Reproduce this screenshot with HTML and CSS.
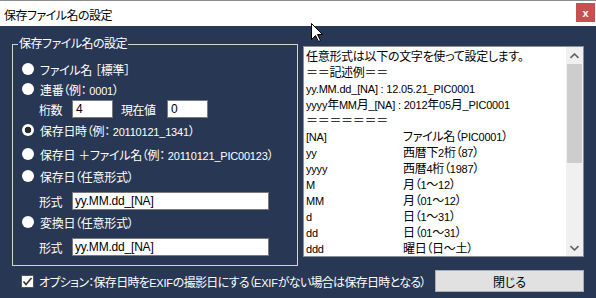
FILE: index.html
```html
<!DOCTYPE html>
<html lang="ja">
<head>
    <meta charset="UTF-8">
    <title>保存ファイル名の設定</title>
    <link rel="stylesheet" href="styles.css">
</head>
<body>
    <div class="window">
        <div class="titlebar">
            <span class="title">保存ファイル名の設定</span>
            <span class="close">x</span>
        </div>

        <div class="main">
            <div class="content">
                <!-- left: naming options -->
                <fieldset class="group">
                    <legend>保存ファイル名の設定</legend>
                    <div class="opt"><span class="radio"></span><span>ファイル名 ［標準］</span></div>
                    <div class="opt"><span class="radio"></span><span>連番（例：<span class="en"> 0001</span>）</span></div>
                    <div class="sub">
                        <span class="label">桁数</span>
                        <span class="input small en">4</span>
                        <span class="label gap">現在値</span>
                        <span class="input small en">0</span>
                    </div>
                    <div class="opt r3"><span class="radio checked"></span><span>保存日時（例：<span class="en"> 20110121_1341</span>）</span></div>
                    <div class="opt r4"><span class="radio"></span><span>保存日 ＋ファイル名（例：<span class="en"> 20110121_PIC00123</span>）</span></div>
                    <div class="opt r5"><span class="radio"></span><span>保存日（任意形式）</span></div>
                    <div class="sub fmt">
                        <span class="label">形式</span>
                        <span class="input wide en">yy.MM.dd_[NA]</span>
                    </div>
                    <div class="opt r6"><span class="radio"></span><span>変換日（任意形式）</span></div>
                    <div class="sub fmt">
                        <span class="label">形式</span>
                        <span class="input wide en">yy.MM.dd_[NA]</span>
                    </div>
                </fieldset>

                <!-- right: help text -->
                <div class="memo">
                    <div class="memo-text">
                        <div class="line">任意形式は以下の文字を使って設定します。</div>
                        <div class="line">＝＝記述例＝＝</div>
                        <div class="line"><span class="en">yy.MM.dd_[NA] : 12.05.21_PIC0001</span></div>
                        <div class="line"><span><span class="en">yyyy</span>年<span class="en">MM</span>月<span class="en">_[NA] : 2012</span>年<span class="en">05</span>月<span class="en">_PIC0001</span></span></div>
                        <div class="line">＝＝＝＝＝＝＝</div>
                        <div class="line"><span class="key en">[NA]</span><span>ファイル名（<span class="en">PIC0001</span>）</span></div>
                        <div class="line"><span class="key en">yy</span><span>西暦下<span class="en">2</span>桁（<span class="en">87</span>）</span></div>
                        <div class="line"><span class="key en">yyyy</span><span>西暦<span class="en">4</span>桁（<span class="en">1987</span>）</span></div>
                        <div class="line"><span class="key en">M</span><span>月（<span class="en">1</span>～<span class="en">12</span>）</span></div>
                        <div class="line"><span class="key en">MM</span><span>月（<span class="en">01</span>～<span class="en">12</span>）</span></div>
                        <div class="line"><span class="key en">d</span><span>日（<span class="en">1</span>～<span class="en">31</span>）</span></div>
                        <div class="line"><span class="key en">dd</span><span>日（<span class="en">01</span>～<span class="en">31</span>）</span></div>
                        <div class="line"><span class="key en">ddd</span><span>曜日（日～土）</span></div>
                    </div>
                    <div class="scrollbar">
                        <div class="arrow">
                            <svg width="9" height="6" viewBox="0 0 9 6"><polyline points="0.5,5 4.5,1 8.5,5" fill="none" stroke="#606060" stroke-width="1.6"/></svg>
                        </div>
                        <div class="thumb"></div>
                        <div class="track"></div>
                        <div class="arrow">
                            <svg width="9" height="6" viewBox="0 0 9 6"><polyline points="0.5,1 4.5,5 8.5,1" fill="none" stroke="#606060" stroke-width="1.6"/></svg>
                        </div>
                    </div>
                </div>
            </div>

            <div class="footer">
                <span class="check">
                    <svg width="11" height="11" viewBox="0 0 11 11"><polyline points="1.5,5.5 4,8.5 9.5,2" fill="none" stroke="#333" stroke-width="1.6"/></svg>
                </span>
                <span class="option">オプション：保存日時を<span class="en">EXIF</span>の撮影日にする（<span class="en">EXIF</span>がない場合は保存日時となる）</span>
                <span class="btn">閉じる</span>
            </div>
        </div>

        <svg class="cursor" width="13" height="20" viewBox="0 0 13 20">
            <path d="M0.5,0.5 L0.5,16.5 L4.5,12.5 L7.5,18.5 L9.5,17.5 L6.5,11.5 L11.5,11.5 Z" fill="#fff" stroke="#000" stroke-width="1"/>
        </svg>
    </div>
</body>
</html>
```

FILE: styles.css
```css
body {
    margin: 0;
    font-family: "Liberation Sans", "Noto Sans CJK JP", sans-serif;
    font-size: 12px;
    font-feature-settings: "palt";
}

.window {
    position: relative;
    width: 596px;
    height: 298px;
    display: flex;
    flex-direction: column;
    overflow: hidden;
}

/* latin runs are narrower than the kanji */
.en {
    font-size: 11px;
    letter-spacing: -0.2px;
}

/* title bar */
.titlebar {
    height: 25px;
    border-top: 1px solid #8c8c8c;
    background: #ffffff;
    display: flex;
    align-items: flex-start;
    padding-left: 4px;
    color: #000;
}
.title {
    margin-top: 5px;
    letter-spacing: -0.5px;
}
.close {
    margin-left: auto;
    margin-top: 2px;
    margin-right: 1px;
    width: 19px;
    height: 19px;
    background: #c75050;
    color: #ffffff;
    font-weight: bold;
    font-size: 11px;
    display: flex;
    align-items: center;
    justify-content: center;
}

.main {
    flex: 1;
    background: #283753;
    padding: 11px 12px 0 12px;
    color: #ffffff;
}
.content {
    display: flex;
    gap: 5px;
}

/* left group */
.group {
    margin: 0;
    width: 286px;
    height: 229px;
    box-sizing: border-box;
    border: 1px solid #d4d4d4;
    padding: 0 0 0 9px;
    min-width: 0;
}
.group legend {
    margin-left: -4px;
    padding: 0 1px;
    line-height: 14px;
    letter-spacing: -0.5px;
}
.opt {
    display: flex;
    align-items: center;
    height: 20px;
    gap: 6px;
    letter-spacing: -0.3px;
    white-space: pre;
}
.opt:first-of-type {
    margin-top: 8px;
}
.r3 { margin-top: 1px; }
.r4 { margin-top: 4px; }
.r5 { margin-top: 2px; }
.r6 { margin-top: 1px; }
.radio {
    width: 12px;
    height: 12px;
    border-radius: 50%;
    background: #ffffff;
    flex: none;
}
.radio.checked {
    background: radial-gradient(circle, #2a2a2a 0 3px, #ffffff 3.6px);
}
.sub {
    display: flex;
    align-items: center;
    height: 20px;
    padding-left: 17px;
}
.sub.fmt {
    margin-top: 5px;
}
.label {
    width: 33px;
    letter-spacing: -0.5px;
}
.label.gap {
    width: 46px;
    margin-left: 8px;
}
.input {
    height: 18px;
    box-sizing: border-box;
    border: 1px solid #7a7a7a;
    background: #ffffff;
    color: #000;
    padding-left: 3px;
    line-height: 16px;
    font-size: 12px;
}
.input.small { width: 41px; }
.input.wide { width: 197px; padding-left: 2px; }

/* right help box */
.memo {
    width: 281px;
    height: 211px;
    margin-top: 9px;
    box-sizing: border-box;
    border: 1px solid #8a8f99;
    background: #ffffff;
    display: flex;
    color: #000;
}
.memo-text {
    flex: 1;
    padding: 2px 0 0 2px;
    overflow: hidden;
    white-space: nowrap;
}
.line {
    display: flex;
    height: 16px;
    line-height: 16px;
    letter-spacing: -0.3px;
}
.key {
    width: 97px;
    flex: none;
}
.scrollbar {
    width: 17px;
    background: #f0f0f0;
    display: flex;
    flex-direction: column;
}
.arrow {
    height: 17px;
    display: flex;
    align-items: center;
    justify-content: center;
}
.thumb {
    height: 99px;
    margin: 0 1px;
    background: #cdcdcd;
}
.track {
    flex: 1;
}

/* bottom row */
.footer {
    display: flex;
    align-items: center;
    height: 22px;
    margin-top: 4px;
    padding-left: 9px;
}
.check {
    width: 13px;
    height: 13px;
    box-sizing: border-box;
    border: 1px solid #555;
    background: #ffffff;
    display: flex;
    align-items: center;
    justify-content: center;
    margin-right: 5px;
}
.option {
    letter-spacing: -0.7px;
    white-space: nowrap;
}
.btn {
    margin-left: auto;
    width: 149px;
    height: 22px;
    box-sizing: border-box;
    border: 1px solid #adadad;
    background: #e1e1e1;
    color: #000;
    display: flex;
    align-items: center;
    justify-content: center;
}

.cursor {
    position: absolute;
    left: 311px;
    top: 23px;
}
```
